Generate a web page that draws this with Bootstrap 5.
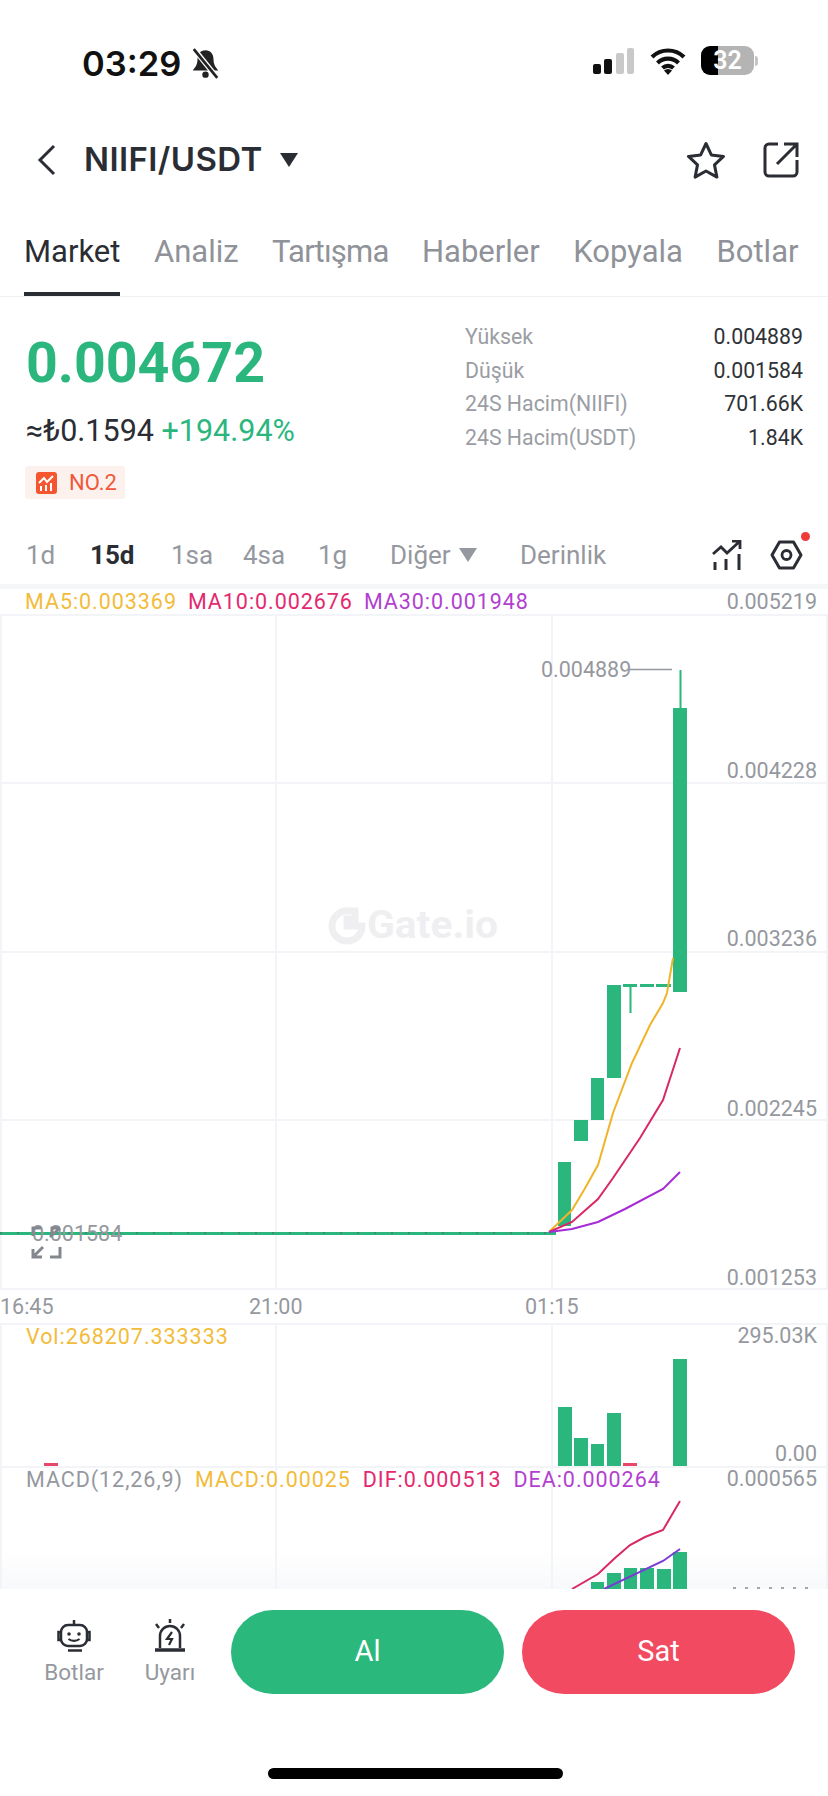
<!DOCTYPE html>
<html lang="en">
<head>
  <meta charset="UTF-8">
  <meta name="viewport" content="width=device-width, initial-scale=1.0">
  <title>NIIFI/USDT</title>
  <link href="https://cdn.jsdelivr.net/npm/bootstrap@5.3.0/dist/css/bootstrap.min.css" rel="stylesheet">
  <style>
    body {
      background-color: #fff;
      font-family: Roboto, "Liberation Sans", sans-serif;
      width: 828px;
      height: 1796px;
      overflow: hidden;
      color: #2a2d33;
    }
    .status-bar { height: 124px; padding: 46px 70px 0 82px; }
    .status-time { font-family: Inter, sans-serif; font-size: 34.5px; font-weight: 600; line-height: 36px; color: #111; }
    .batt-box { width: 53px; height: 29px; border-radius: 9px; background: linear-gradient(90deg, #000 32%, #b4b4b4 32%); color: #fff; font-size: 25px; font-weight: 600; line-height: 29px; text-align: center; }
    .batt-nub { width: 3px; height: 10px; background: #c4c4c4; border-radius: 0 3px 3px 0; margin-left: 1px; }
    .pair-bar { height: 72px; padding: 0 29px 0 36px; }
    .pair-name { font-family: Inter, sans-serif; font-size: 33px; font-weight: 600; color: #2a2d33; letter-spacing: .4px; margin-left: 26px; }
    .tab-row { height: 101px; padding-left: 24px; gap: 33.5px; border-bottom: 1px solid #f1f2f4; }
    .tab-item { font-size: 31px; color: #8f9298; height: 100px; padding-top: 36px; line-height: 40px; }
    .tab-on { color: #2a2d33; border-bottom: 4px solid #2a2d33; }
    .tab-tight { letter-spacing: -.8px; }
    .ticker { height: 229px; padding: 0 25px 0 26px; }
    .last-price { font-size: 55.5px; font-weight: 700; color: #2bb67d; line-height: 60px; margin-top: 37px; }
    .fiat-line { font-size: 30.5px; line-height: 36px; margin-top: 19px; }
    .up-text { color: #2bb67d; }
    .rank-tag { background: #fdf1ed; color: #f0583a; font-size: 22px; height: 33px; width: 100px; margin-top: 17px; margin-left: -1px; border-radius: 3px; padding-left: 11px; gap: 12px; }
    .stat-box { width: 338px; padding-top: 23px; font-size: 21.3px; }
    .stat-line { height: 33.7px; line-height: 33.7px; }
    .stat-label { color: #9a9da3; }
    .stat-val { color: #2f3237; }
    .period-row { height: 63px; padding: 0 25px 0 26px; border-bottom: 5px solid #f5f6f8; }
    .period-item { font-size: 26px; color: #95989e; line-height: 30px; }
    .period-on { font-weight: 700; color: #2a2d33; }
    .dot-red { top: -8px; right: -7px; width: 9px; height: 9px; background: #ee3b3b; border-radius: 50%; }
    .ma-row { height: 25px; padding: 0 11px 0 25px; font-size: 21.5px; line-height: 26px; gap: 11px; }
    .ma-row .legend-txt, .plot-legend { letter-spacing: .95px; }
    .c-yel { color: #f2bc3a; }
    .c-pink { color: #e3296f; }
    .c-pur { color: #b23fd0; }
    .c-gray { color: #95989e; }
    .x-row { height: 33px; font-size: 21.5px; line-height: 34px; color: #95989e; }
    .plot-box svg { display: block; }
    .plot-legend { top: 1px; left: 26px; font-size: 21.5px; line-height: 26px; gap: 12px; }
    .action-bar { height: 207px; padding: 21px 33px 0 0; }
    .side-item { font-size: 22.5px; color: #95989e; line-height: 26px; padding-top: 9px; }
    .side-item svg { display: block; margin: 0 auto 6px; }
    .side-first { width: 148px; }
    .side-second { width: 92px; margin-left: -24px; }
    .trade-btn { width: 273px; height: 84px; border-radius: 42px; border: 0; color: #fff; font-size: 29px; }
    .btn-al { background: #2bb87d; }
    .btn-sat { background: #f24a60; }
    .home-pill { width: 295px; height: 11px; background: #000; border-radius: 6px; left: 268px; top: 1768px; }
    .w-1d { width: 64px; }
    .w-15d { width: 81px; }
    .w-1sa { width: 72px; }
    .w-4sa { width: 75px; }
    .w-1g { width: 72px; }
    .w-diger { width: 130px; }
    .w-x1 { width: 249px; }
    .w-x2 { width: 276px; }
    svg text { font-family: Roboto, "Liberation Sans", sans-serif; }
  </style>
</head>
<body class="m-0 position-relative">

<div class="status-bar d-flex align-items-start justify-content-between">
  <div class="d-flex align-items-center gap-2">
    <span class="status-time">03:29</span>
    <svg width="33" height="32" viewBox="0 0 30 30"><path d="M15 2c-5 0-7.500 4-7.500 8.500 0 5-2 7.500-4.500 10.500h24c-2.500-3-4.500-5.500-4.500-10.500C22.500 6 20 2 15 2z" fill="#222"/><circle cx="15" cy="25" r="3" fill="#222"/><path d="M5 2l21 26" stroke="#fff" stroke-width="5"/><path d="M4 1l22 27" stroke="#222" stroke-width="2.500"/></svg>
  </div>
  <div class="d-flex align-items-center" style="gap:15px">
    <svg width="42" height="28" viewBox="0 0 42 28"><rect x="0" y="17" width="8" height="10" rx="2" fill="#111"/><rect x="11" y="12" width="8" height="15" rx="2" fill="#111"/><rect x="23" y="6" width="8" height="21" rx="2" fill="#c9c9c9"/><rect x="34" y="1" width="7" height="26" rx="2" fill="#c9c9c9"/></svg>
    <svg width="36" height="28" viewBox="0 0 36 28"><path d="M2 10a23 23 0 0 1 32 0M7.500 16a15 15 0 0 1 21 0M12.500 21a8 8 0 0 1 11 0" fill="none" stroke="#111" stroke-width="4.200"/><path d="M18 28l-4-4.500a6 6 0 0 1 8 0z" fill="#111"/></svg>
    <div class="d-flex align-items-center">
      <div class="batt-box">32</div>
      <span class="batt-nub"></span>
    </div>
  </div>
</div>

<div class="pair-bar d-flex align-items-center justify-content-between">
  <div class="d-flex align-items-center">
    <svg width="22" height="32" viewBox="0 0 22 32"><path d="M18 2L4 16l14 14" fill="none" stroke="#2a2d33" stroke-width="3"/></svg>
    <span class="pair-name">NIIFI/USDT</span>
    <svg class="ms-3" width="20" height="16" viewBox="0 0 20 16"><path d="M1 1h18l-9 14z" fill="#2a2d33"/></svg>
  </div>
  <div class="d-flex align-items-center" style="gap:37px">
    <svg width="40" height="38" viewBox="0 0 40 38"><path d="M20 2.500l5.300 11.400 12.200 1.500-9 8.500 2.400 12.200L20 30l-10.900 6.100 2.400-12.200-9-8.500 12.200-1.500z" fill="none" stroke="#2a2d33" stroke-width="3" stroke-linejoin="round"/></svg>
    <svg width="36" height="36" viewBox="0 0 36 36"><path d="M15 2H6a4 4 0 0 0-4 4v24a4 4 0 0 0 4 4h24a4 4 0 0 0 4-4v-12" fill="none" stroke="#2a2d33" stroke-width="3"/><path d="M14 22L33 3M21 2h13v13" fill="none" stroke="#2a2d33" stroke-width="3"/></svg>
  </div>
</div>

<div class="tab-row d-flex">
  <div class="tab-item tab-on">Market</div>
  <div class="tab-item">Analiz</div>
  <div class="tab-item tab-tight">Tartışma</div>
  <div class="tab-item">Haberler</div>
  <div class="tab-item">Kopyala</div>
  <div class="tab-item">Botlar</div>
</div>

<div class="ticker d-flex justify-content-between">
  <div>
    <div class="last-price">0.004672</div>
    <div class="fiat-line">≈₺0.1594 <span class="up-text">+194.94%</span></div>
    <div class="rank-tag d-flex align-items-center">
      <svg width="21" height="22" viewBox="0 0 21 22"><rect width="21" height="22" rx="3" fill="#f5562f"/><path d="M3 11l5-5 3 4 6-6" fill="none" stroke="#fff" stroke-width="2"/><path d="M5 19v-5M10 19v-6M15 19v-8" stroke="#fff" stroke-width="2"/></svg>
      <span>NO.2</span>
    </div>
  </div>
  <div class="stat-box">
    <div class="stat-line d-flex justify-content-between"><span class="stat-label">Yüksek</span><span class="stat-val">0.004889</span></div>
    <div class="stat-line d-flex justify-content-between"><span class="stat-label">Düşük</span><span class="stat-val">0.001584</span></div>
    <div class="stat-line d-flex justify-content-between"><span class="stat-label">24S Hacim(NIIFI)</span><span class="stat-val">701.66K</span></div>
    <div class="stat-line d-flex justify-content-between"><span class="stat-label">24S Hacim(USDT)</span><span class="stat-val">1.84K</span></div>
  </div>
</div>

<div class="period-row d-flex align-items-center">
  <div class="d-flex align-items-center flex-grow-1">
    <span class="period-item w-1d">1d</span>
    <span class="period-item period-on w-15d">15d</span>
    <span class="period-item w-1sa">1sa</span>
    <span class="period-item w-4sa">4sa</span>
    <span class="period-item w-1g">1g</span>
    <span class="period-item d-flex align-items-center w-diger">Diğer
      <svg class="ms-2" width="18" height="14" viewBox="0 0 18 14"><path d="M0 0h18l-9 14z" fill="#95989e"/></svg></span>
    <span class="period-item">Derinlik</span>
  </div>
  <div class="d-flex align-items-center" style="gap:28px">
    <svg width="30" height="30" viewBox="0 0 30 30"><path d="M1 14l8-7 6 6 12-11M20 1h8v8" fill="none" stroke="#2a2d33" stroke-width="2.800"/><path d="M3 30v-8M14 30V19M27 30V14" stroke="#2a2d33" stroke-width="3"/></svg>
    <div class="position-relative">
      <svg class="d-block" width="33" height="30" viewBox="0 0 33 30"><path d="M9.500 2h14L31 15l-7.500 13h-14L2 15z" fill="none" stroke="#2a2d33" stroke-width="3" stroke-linejoin="round"/><circle cx="16.500" cy="15" r="4.500" fill="none" stroke="#2a2d33" stroke-width="2.800"/></svg>
      <span class="dot-red position-absolute"></span>
    </div>
  </div>
</div>

<div class="ma-row d-flex">
  <span class="legend-txt c-yel">MA5:0.003369</span>
  <span class="legend-txt c-pink">MA10:0.002676</span>
  <span class="legend-txt c-pur">MA30:0.001948</span>
  <span class="c-gray ms-auto">0.005219</span>
</div>

<!-- main chart, viewBox uses page y so the numbers read off the screenshot directly -->
<div class="plot-box">
  <svg width="828" height="676" viewBox="0 614 828 676">
    <g stroke="#f3f4f7" stroke-width="2" fill="none">
      <path d="M0 615H828M0 783H828M0 952H828M0 1120H828M0 1289H828"/>
      <path d="M1 614V1290M276 614V1290M552 614V1290M827 614V1290"/>
    </g>
    <g font-size="21.500" fill="#95989e" text-anchor="end">
      <text x="817" y="778">0.004228</text>
      <text x="817" y="946">0.003236</text>
      <text x="817" y="1116">0.002245</text>
      <text x="817" y="1285">0.001253</text>
    </g>
    <!-- watermark -->
    <g fill="#efeff1">
      <path d="M346 911a15 15 0 1 0 16 15h-15v-7h8v-8z" fill="none" stroke="#efeff1" stroke-width="7"/>
      <text x="367" y="938" font-size="38" font-weight="700" textLength="131" lengthAdjust="spacingAndGlyphs">Gate.io</text>
    </g>
    <!-- flat line -->
    <rect x="0" y="1232" width="556" height="3" fill="#2bb67d"/>
    <path d="M0 1233H552" stroke="#56606a" stroke-width="1" stroke-dasharray="2 15" fill="none"/>
    <!-- candles -->
    <g fill="#2bb67d">
      <rect x="558" y="1162" width="13" height="64"/>
      <rect x="574" y="1120" width="14" height="21"/>
      <rect x="591" y="1078" width="13" height="42"/>
      <rect x="607" y="985" width="14" height="93"/>
      <rect x="673" y="708" width="14" height="284"/>
      <rect x="679.500" y="670" width="2" height="38"/>
      <rect x="629.500" y="985" width="2" height="28"/>
      <rect x="623" y="984" width="14" height="3"/>
      <rect x="640" y="984" width="14" height="3"/>
      <rect x="656" y="984" width="15" height="3"/>
    </g>
    <!-- moving averages -->
    <g fill="none" stroke-width="2">
      <path d="M549 1232L572 1210 584 1190 598 1165 613 1113 632 1063 650 1025 663 1003 667 993 673 958" stroke="#f0b429"/>
      <path d="M549 1232L572 1222 598 1199 613 1178 640 1138 663 1100 680 1048" stroke="#d92868"/>
      <path d="M549 1232L572 1229 598 1222 625 1209 663 1189 680 1172" stroke="#a62bd6"/>
    </g>
    <g font-size="21.500" fill="#95989e">
      <text x="541" y="677">0.004889</text>
      <path d="M630 669.500H672" stroke="#95989e" stroke-width="1.500"/>
      <text x="32" y="1241">0.001584</text>
    </g>
    <!-- fullscreen toggle -->
    <g fill="none" stroke="#84878d" stroke-width="3">
      <path d="M33 1236v-8h8M60 1228l-10 9M60 1228h-8v8" />
      <path d="M33 1257l10-10M33 1249v8h9M60 1247v10h-10"/>
    </g>
  </svg>
</div>

<div class="x-row d-flex">
  <span class="w-x1">16:45</span>
  <span class="w-x2">21:00</span>
  <span>01:15</span>
</div>

<div class="plot-box position-relative">
  <svg width="828" height="143" viewBox="0 1323 828 143">
    <path d="M0 1324H828M1 1323V1466M276 1323V1466M552 1323V1466M827 1323V1466" stroke="#f3f4f7" stroke-width="2" fill="none"/>
    <g fill="#2bb67d">
      <rect x="558" y="1407" width="14" height="59"/>
      <rect x="574" y="1438" width="14" height="28"/>
      <rect x="591" y="1444" width="13" height="22"/>
      <rect x="607" y="1413" width="14" height="53"/>
      <rect x="673" y="1359" width="14" height="107"/>
    </g>
    <rect x="44" y="1463" width="14" height="3" fill="#e8476a"/>
    <rect x="623" y="1463" width="14" height="3" fill="#e8476a"/>
    <g font-size="21.500" fill="#95989e" text-anchor="end">
      <text x="817" y="1343">295.03K</text>
      <text x="817" y="1461">0.00</text>
    </g>
  </svg>
  <div class="plot-legend position-absolute d-flex c-yel">Vol:268207.333333</div>
</div>

<div class="plot-box position-relative">
  <svg width="828" height="123" viewBox="0 1466 828 123">
    <defs>
      <linearGradient id="fadeEnd" x1="0" y1="0" x2="0" y2="1">
        <stop offset="0" stop-color="#f8f9fb" stop-opacity="0"/>
        <stop offset="1" stop-color="#f8f9fb"/>
      </linearGradient>
    </defs>
    <rect x="0" y="1550" width="828" height="39" fill="url(#fadeEnd)"/>
    <path d="M0 1467H828M1 1466V1589M276 1466V1589M552 1466V1589M827 1466V1589" stroke="#f3f4f7" stroke-width="2" fill="none"/>
    <g fill="#2bb67d">
      <rect x="591" y="1582" width="13" height="7"/>
      <rect x="607" y="1573" width="14" height="16"/>
      <rect x="624" y="1568" width="13" height="21"/>
      <rect x="640" y="1568" width="14" height="21"/>
      <rect x="657" y="1569" width="14" height="20"/>
      <rect x="673" y="1552" width="14" height="37"/>
    </g>
    <path d="M572 1589L598 1574 615 1558 630 1545 645 1537 663 1530 680 1501" fill="none" stroke="#d92868" stroke-width="2"/>
    <path d="M604 1589L663 1561 680 1549" fill="none" stroke="#7a3bd6" stroke-width="2"/>
    <text x="817" y="1486" font-size="21.500" fill="#95989e" text-anchor="end">0.000565</text>
    <!-- tops of the next axis label, mostly hidden by the action bar -->
    <path d="M733 1588H816" stroke="#a5a8ad" stroke-width="2" stroke-dasharray="3 9" fill="none"/>
  </svg>
  <div class="plot-legend position-absolute d-flex">
    <span class="c-gray">MACD(12,26,9)</span>
    <span class="c-yel">MACD:0.00025</span>
    <span class="c-pink">DIF:0.000513</span>
    <span class="c-pur">DEA:0.000264</span>
  </div>
</div>

<div class="action-bar d-flex align-items-start">
  <div class="side-item text-center side-first">
    <svg width="36" height="34" viewBox="0 0 36 34"><path d="M18 1v5" stroke="#2a2d33" stroke-width="2.500"/><path d="M12 6h12a7 7 0 0 1 7 7v7a7 7 0 0 1-7 7h-12a7 7 0 0 1-7-7v-7a7 7 0 0 1 7-7z" fill="none" stroke="#2a2d33" stroke-width="2.500"/><path d="M5 13H2.500v8H5M31 13h2.500v8H31" fill="none" stroke="#2a2d33" stroke-width="2.500"/><circle cx="13" cy="15" r="1.800" fill="#2a2d33"/><circle cx="23" cy="15" r="1.800" fill="#2a2d33"/><path d="M12.500 20c3 2.500 8 2.500 11 0" fill="none" stroke="#2a2d33" stroke-width="2.200"/><path d="M12 31.500h14" stroke="#2a2d33" stroke-width="2.500"/></svg>
    Botlar
  </div>
  <div class="side-item text-center side-second">
    <svg width="36" height="34" viewBox="0 0 36 34"><path d="M8 29V17a10 10 0 0 1 20 0v12" fill="none" stroke="#2a2d33" stroke-width="2.500"/><path d="M3 31h30" stroke="#2a2d33" stroke-width="3.500"/><path d="M18 0v4M4 5l3 4M32 5l-3 4" stroke="#2a2d33" stroke-width="2.500"/><path d="M20 13l-5 7h5l-3 6" fill="none" stroke="#2a2d33" stroke-width="2.200"/></svg>
    Uyarı
  </div>
  <div class="d-flex ms-auto" style="gap:18px">
    <button class="trade-btn btn-al">Al</button>
    <button class="trade-btn btn-sat">Sat</button>
  </div>
</div>

<div class="home-pill position-absolute"></div>

<script src="https://cdn.jsdelivr.net/npm/bootstrap@5.3.0/dist/js/bootstrap.bundle.min.js"></script>
</body>
</html>
